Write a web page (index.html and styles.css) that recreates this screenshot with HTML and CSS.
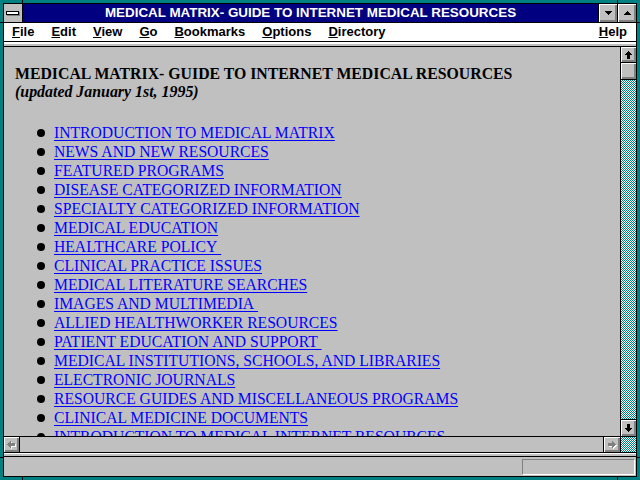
FILE: index.html
```html
<!DOCTYPE html>
<html>
<head>
<meta charset="utf-8">
<title>MEDICAL MATRIX- GUIDE TO INTERNET MEDICAL RESOURCES</title>
<link rel="stylesheet" href="styles.css">
</head>
<body>
<div class="window">
  <div class="frame">
    <div class="titlebar">
      <div class="sysbox"><span class="sysbar"></span></div>
      <div class="title">MEDICAL MATRIX- GUIDE TO INTERNET MEDICAL RESOURCES</div>
      <div class="tbtn">
        <svg width="7" height="4" viewBox="0 0 7 4" shape-rendering="crispEdges"><rect x="0" y="0" width="7" height="1"/><rect x="1" y="1" width="5" height="1"/><rect x="2" y="2" width="3" height="1"/><rect x="3" y="3" width="1" height="1"/></svg>
      </div>
      <div class="tbtn">
        <svg width="7" height="4" viewBox="0 0 7 4" shape-rendering="crispEdges"><rect x="3" y="0" width="1" height="1"/><rect x="2" y="1" width="3" height="1"/><rect x="1" y="2" width="5" height="1"/><rect x="0" y="3" width="7" height="1"/></svg>
      </div>
    </div>
    <div class="menubar">
      <span><u>F</u>ile</span>
      <span><u>E</u>dit</span>
      <span><u>V</u>iew</span>
      <span><u>G</u>o</span>
      <span><u>B</u>ookmarks</span>
      <span><u>O</u>ptions</span>
      <span><u>D</u>irectory</span>
      <span class="help"><u>H</u>elp</span>
    </div>
    <div class="stripe-top"></div>
    <div class="main">
      <div class="content">
        <h1>MEDICAL MATRIX- GUIDE TO INTERNET MEDICAL RESOURCES</h1>
        <p class="updated">(updated January 1st, 1995)</p>
        <ul class="links">
          <li><a href="#">INTRODUCTION TO MEDICAL MATRIX</a></li>
          <li><a href="#">NEWS AND NEW RESOURCES</a></li>
          <li><a href="#">FEATURED PROGRAMS</a></li>
          <li><a href="#">DISEASE CATEGORIZED INFORMATION</a></li>
          <li><a href="#">SPECIALTY CATEGORIZED INFORMATION</a></li>
          <li><a href="#">MEDICAL EDUCATION</a></li>
          <li><a href="#">HEALTHCARE POLICY&nbsp;</a></li>
          <li><a href="#">CLINICAL PRACTICE ISSUES</a></li>
          <li><a href="#">MEDICAL LITERATURE SEARCHES</a></li>
          <li><a href="#">IMAGES AND MULTIMEDIA&nbsp;</a></li>
          <li><a href="#">ALLIED HEALTHWORKER RESOURCES</a></li>
          <li><a href="#">PATIENT EDUCATION AND SUPPORT&nbsp;</a></li>
          <li><a href="#">MEDICAL INSTITUTIONS, SCHOOLS, AND LIBRARIES</a></li>
          <li><a href="#">ELECTRONIC JOURNALS</a></li>
          <li><a href="#">RESOURCE GUIDES AND MISCELLANEOUS PROGRAMS</a></li>
          <li><a href="#">CLINICAL MEDICINE DOCUMENTS</a></li>
          <li><a href="#">INTRODUCTION TO MEDICAL INTERNET RESOURCES</a></li>
        </ul>
      </div>
      <div class="vscroll">
        <div class="sbtn up">
          <svg width="7" height="8" viewBox="0 0 7 8" shape-rendering="crispEdges"><rect x="3" y="0" width="1" height="1"/><rect x="2" y="1" width="3" height="1"/><rect x="1" y="2" width="5" height="1"/><rect x="0" y="3" width="7" height="1"/><rect x="2" y="4" width="3" height="4"/></svg>
        </div>
        <div class="sbtn thumb"></div>
        <div class="track"></div>
        <div class="sbtn down">
          <svg width="7" height="8" viewBox="0 0 7 8" shape-rendering="crispEdges"><rect x="2" y="0" width="3" height="4"/><rect x="0" y="4" width="7" height="1"/><rect x="1" y="5" width="5" height="1"/><rect x="2" y="6" width="3" height="1"/><rect x="3" y="7" width="1" height="1"/></svg>
        </div>
      </div>
    </div>
    <div class="hscroll">
      <div class="sbtn left">
        <svg width="9" height="8" viewBox="0 0 9 8" shape-rendering="crispEdges">
          <g fill="#fff"><rect x="4" y="1" width="1" height="7"/><rect x="3" y="2" width="1" height="5"/><rect x="2" y="3" width="1" height="3"/><rect x="1" y="4" width="1" height="1"/><rect x="5" y="3" width="4" height="3"/></g>
          <g fill="#808080"><rect x="3" y="0" width="1" height="7"/><rect x="2" y="1" width="1" height="5"/><rect x="1" y="2" width="1" height="3"/><rect x="0" y="3" width="1" height="1"/><rect x="4" y="2" width="4" height="3"/></g>
        </svg>
      </div>
      <div class="htrack"></div>
      <div class="sbtn right">
        <svg width="9" height="8" viewBox="0 0 9 8" shape-rendering="crispEdges">
          <g fill="#fff"><rect x="5" y="1" width="1" height="7"/><rect x="6" y="2" width="1" height="5"/><rect x="7" y="3" width="1" height="3"/><rect x="8" y="4" width="1" height="1"/><rect x="1" y="3" width="4" height="3"/></g>
          <g fill="#808080"><rect x="4" y="0" width="1" height="7"/><rect x="5" y="1" width="1" height="5"/><rect x="6" y="2" width="1" height="3"/><rect x="7" y="3" width="1" height="1"/><rect x="0" y="2" width="4" height="3"/></g>
        </svg>
      </div>
      <div class="corner"></div>
    </div>
    <div class="stripe-bot"></div>
    <div class="status"><div class="statbox"></div></div>
  </div>
  <span class="notch nv nt1"></span>
  <span class="notch nv nt2"></span>
  <span class="notch nv nb1"></span>
  <span class="notch nv nb2"></span>
  <span class="notch nh nl1"></span>
  <span class="notch nh nl2"></span>
  <span class="notch nh nr1"></span>
  <span class="notch nh nr2"></span>
</div>
</body>
</html>
```
FILE: styles.css
```css
* { box-sizing: border-box; }
html, body { margin: 0; padding: 0; }
body { width: 640px; height: 480px; overflow: hidden; background: #008080; }

.window {
  position: relative;
  width: 640px;
  height: 480px;
  padding: 3px;
  background: #008080;
}
.frame {
  display: flex;
  flex-direction: column;
  height: 474px;
  border: 1px solid #000;
  background: #c0c0c0;
}

/* title bar */
.titlebar {
  display: flex;
  flex: none;
  height: 19px;
  border-bottom: 1px solid #000;
  background: #000080;
}
.sysbox {
  width: 19px;
  border-right: 1px solid #000;
  background: #c0c0c0;
  display: flex;
  align-items: center;
  justify-content: center;
}
.sysbar {
  display: block;
  width: 13px;
  height: 4px;
  margin: -1px 1px 0 0;
  border: 1px solid #000;
  background: #fff;
  box-shadow: 1px 1px 0 #808080;
}
.title {
  flex: 1;
  color: #fff;
  font: bold 13.4px/18px "Liberation Sans", Arial, sans-serif;
  text-align: center;
  white-space: nowrap;
}
.tbtn {
  width: 19px;
  border-left: 1px solid #000;
  background: #c0c0c0;
  box-shadow: inset 1px 1px #fff, inset -1px -1px #808080, inset -2px -2px #808080;
  display: flex;
  align-items: center;
  justify-content: center;
}

/* menu */
.menubar {
  display: flex;
  flex: none;
  height: 19px;
  border-bottom: 1px solid #000;
  background: #fff;
  padding: 0 9px 0 8px;
  gap: 17px;
  font: bold 13px/18px "Liberation Sans", Arial, sans-serif;
  color: #000;
}
.menubar .help { margin-left: auto; }

.stripe-top {
  flex: none;
  height: 5px;
  border-bottom: 1px solid #000;
  background: linear-gradient(#fff 0 2px, #c0c0c0 2px);
}

/* main document area */
.main {
  display: flex;
  flex: none;
  height: 390px;
  border-bottom: 1px solid #000;
}
.content {
  flex: 1;
  overflow: hidden;
  padding: 18px 0 0 11px;
  font-family: "Liberation Serif", "Times New Roman", serif;
  font-size: 15.65px;
  color: #000;
  background: #c0c0c0;
}
.content h1 {
  margin: 0;
  font-size: 15.8px;
  font-weight: bold;
  line-height: 18px;
  white-space: nowrap;
}
.content .updated {
  margin: 0;
  font-size: 15.9px;
  font-weight: bold;
  font-style: italic;
  line-height: 18px;
}
.links {
  list-style: none;
  margin: 22px 0 0;
  padding: 0 0 0 22px;
}
.links li {
  display: flex;
  align-items: center;
  height: 19px;
  line-height: 19px;
  white-space: nowrap;
}
.links li::before {
  content: "";
  flex: none;
  width: 8px;
  height: 8px;
  margin-right: 9px;
  border-radius: 50%;
  background: #000;
}
.links a {
  color: #0000ff;
  text-decoration: underline;
  text-underline-offset: 2px;
}

/* scrollbars */
.sbtn {
  flex: none;
  background: #c0c0c0;
  box-shadow: inset 1px 1px #fff, inset -1px -1px #808080, inset -2px -2px #808080;
  display: flex;
  align-items: center;
  justify-content: center;
}
.vscroll {
  flex: none;
  width: 16px;
  border-left: 1px solid #000;
  display: flex;
  flex-direction: column;
}
.vscroll .up { height: 16px; border-bottom: 1px solid #000; }
.vscroll .thumb { height: 17px; border-bottom: 1px solid #000; }
.vscroll .down { height: 17px; border-top: 1px solid #000; }
.track, .corner {
  background: repeating-conic-gradient(#008080 0 25%, #fff 0 50%) 0 0 / 2px 2px;
}
.track { flex: 1; }

.hscroll {
  display: flex;
  flex: none;
  height: 16px;
  border-bottom: 1px solid #000;
}
.hscroll .left { width: 16px; border-right: 1px solid #000; }
.htrack { flex: 1; background: #c0c0c0; }
.hscroll .right { width: 17px; border-left: 1px solid #000; }
.corner { flex: none; width: 16px; border-left: 1px solid #000; }

.stripe-bot {
  flex: none;
  height: 4px;
  border-bottom: 1px solid #000;
  background: linear-gradient(#fff 0 1px, #c0c0c0 1px);
}
.status {
  flex: none;
  height: 19px;
  display: flex;
  justify-content: flex-end;
  padding: 2px 1px 1px 0;
  background: #c0c0c0;
}
.statbox {
  width: 113px;
  border: 1px solid;
  border-color: #808080 #fff #fff #808080;
}

/* resize-corner notches in the frame */
.notch { position: absolute; background: #000; }
.nv { width: 1px; height: 3px; }
.nh { width: 3px; height: 1px; }
.nt1 { left: 22px; top: 0; }
.nt2 { left: 617px; top: 0; }
.nb1 { left: 22px; bottom: 0; }
.nb2 { left: 617px; bottom: 0; }
.nl1 { left: 0; top: 22px; }
.nl2 { left: 0; top: 457px; }
.nr1 { right: 0; top: 22px; }
.nr2 { right: 0; top: 457px; }
```
